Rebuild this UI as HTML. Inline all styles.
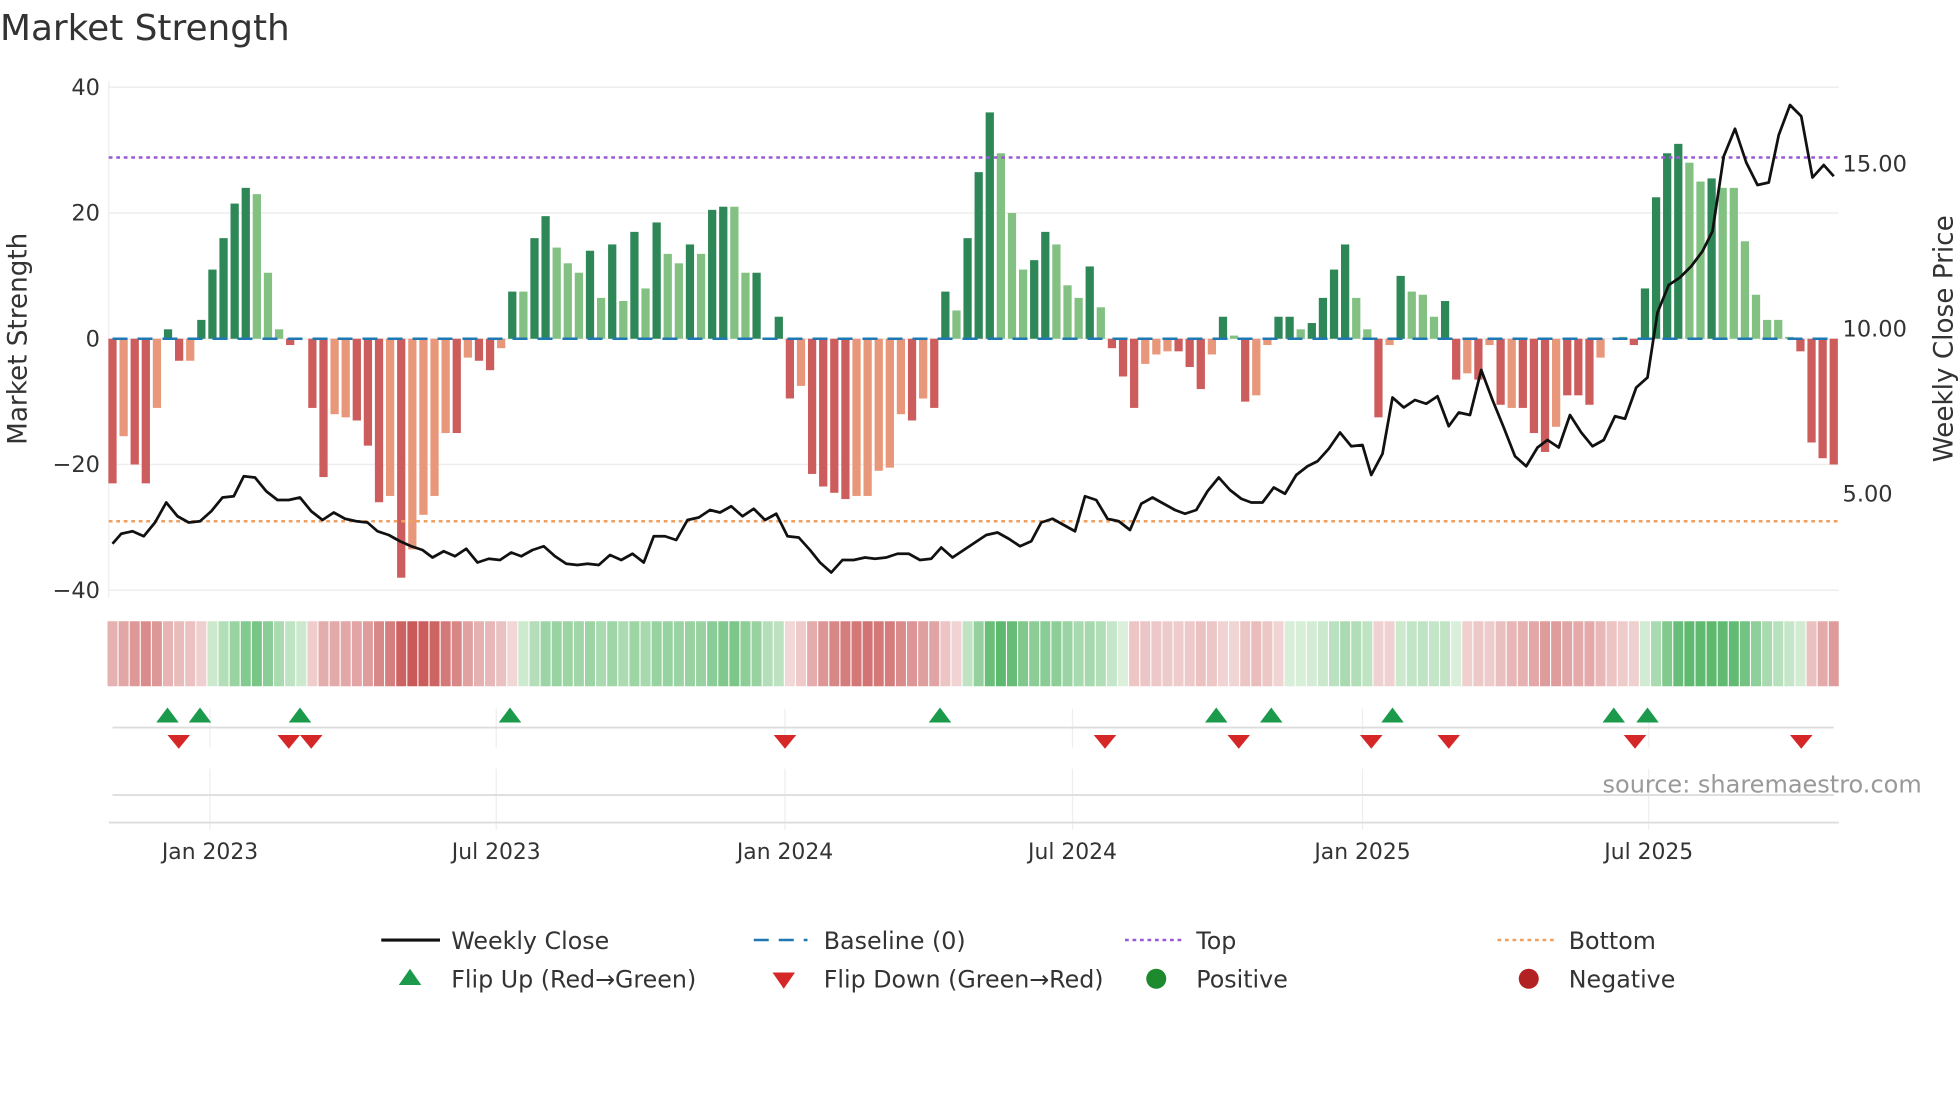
<!DOCTYPE html>
<html><head><meta charset="utf-8"><style>
html,body{margin:0;padding:0;background:#fff;width:1960px;height:1102px;overflow:hidden}
svg{display:block}
text{font-family:"DejaVu Sans","Liberation Sans",sans-serif;fill:#333}
</style></head><body>
<svg id="s" width="1960" height="1102" viewBox="0 0 1568 881.6" xmlns="http://www.w3.org/2000/svg">
<text x="0" y="32" font-size="28.7" fill="#333">Market Strength</text>
<g id="grid"></g>
<g id="bars"></g>
<g id="over"></g>
<text transform="translate(21,271) rotate(-90)" font-size="21" text-anchor="middle">Market Strength</text>
<text transform="translate(1562,271) rotate(-90)" font-size="21" text-anchor="middle">Weekly Close Price</text>
<text x="1282" y="634" font-size="19.2" fill="#999" style="fill:#999">source: sharemaestro.com</text>
<g id="legend" font-size="19">
<line x1="305" y1="752" x2="352" y2="752" stroke="#111" stroke-width="2.5"/>
<text x="361" y="759">Weekly Close</text>
<line x1="603" y1="752" x2="646" y2="752" stroke="#1f77b4" stroke-width="2" stroke-dasharray="12,8"/>
<text x="659" y="759">Baseline (0)</text>
<line x1="900" y1="752" x2="945" y2="752" stroke="#9b59d6" stroke-width="2" stroke-dasharray="3,3"/>
<text x="957" y="759">Top</text>
<line x1="1198" y1="752" x2="1243" y2="752" stroke="#f0a060" stroke-width="2" stroke-dasharray="3,3"/>
<text x="1255" y="759">Bottom</text>
<polygon points="319,788 337,788 328,775" fill="#1a9a4a"/>
<text x="361" y="790">Flip Up (Red→Green)</text>
<polygon points="618,778 636,778 627,791" fill="#d62728"/>
<text x="659" y="790">Flip Down (Green→Red)</text>
<circle cx="925" cy="783" r="8" fill="#1e8a2e"/>
<text x="957" y="790">Positive</text>
<circle cx="1223" cy="783" r="8" fill="#b22222"/>
<text x="1255" y="790">Negative</text>
</g>
</svg>
<script>
var NS="http://www.w3.org/2000/svg";
function el(p,t,a){var e=document.createElementNS(NS,t);for(var k in a)e.setAttribute(k,a[k]);p.appendChild(e);return e;}
var grid=document.getElementById('grid'),bars=document.getElementById('bars'),over=document.getElementById('over');
function Y(v){return 271-v*5.03;}
[40,20,0,-20,-40].forEach(function(v){el(grid,'line',{x1:87,x2:1471,y1:Y(v),y2:Y(v),stroke:'#eee','stroke-width':1.2});
 var t=el(grid,'text',{x:80,y:Y(v)+6,'font-size':18,'text-anchor':'end'});t.textContent=(v<0?'\u2212'+(-v):v);});
el(grid,'line',{x1:87,x2:87,y1:65,y2:478,stroke:'#eee'});
[['15.00',131],['10.00',263],['5.00',395]].forEach(function(a){var t=el(grid,'text',{x:1474,y:a[1]+6,'font-size':18});t.textContent=a[0];});
var dates=[['Jan 2023',168],['Jul 2023',397],['Jan 2024',628],['Jul 2024',858],['Jan 2025',1090],['Jul 2025',1319]];
dates.forEach(function(d){el(grid,'line',{x1:d[1],x2:d[1],y1:567,y2:598,stroke:'#eee'});el(grid,'line',{x1:d[1],x2:d[1],y1:615,y2:664,stroke:'#eee'});
 var t=el(grid,'text',{x:d[1],y:687,'font-size':17.5,'text-anchor':'middle'});t.textContent=d[0];});
el(grid,'line',{x1:90,x2:1467,y1:582,y2:582,stroke:'#ddd','stroke-width':1.5});
el(grid,'line',{x1:90,x2:1467,y1:636,y2:636,stroke:'#ddd','stroke-width':1.5});
el(grid,'line',{x1:87,x2:1471,y1:658,y2:658,stroke:'#ddd','stroke-width':1.5});
var D="R-23 r-15.5 R-20 R-23 r-11 G1.5 R-3.5 r-3.5 G3 G11 G16 G21.5 G24 g23 g10.5 g1.5 R-1 R0 R-11 R-22 r-12 r-12.5 R-13 R-17 R-26 r-25 R-38 r-33.5 r-28 r-25 r-15 R-15 r-3 R-3.5 R-5 r-1.5 G7.5 g7.5 G16 G19.5 g14.5 g12 g10.5 G14 g6.5 G15 g6 G17 g8 G18.5 g13.5 g12 G15 g13.5 G20.5 G21 g21 g10.5 G10.5 G0 G3.5 R-9.5 r-7.5 R-21.5 R-23.5 R-24.5 R-25.5 r-25 r-25 r-21 r-20.5 r-12 R-13 r-9.5 R-11 G7.5 g4.5 G16 G26.5 G36 g29.5 g20 g11 G12.5 G17 g15 g8.5 g6.5 G11.5 g5 R-1.5 R-6 R-11 r-4 r-2.5 r-2 R-2 R-4.5 R-8 r-2.5 G3.5 g0.5 R-10 r-9 r-1 G3.5 G3.5 g1.5 G2.5 G6.5 G11 G15 g6.5 g1.5 R-12.5 r-1 G10 g7.5 g7 g3.5 G6 R-6.5 r-5.5 R-6.5 r-1 R-10.5 r-11 R-11 R-15 R-18 r-14 R-9 R-9 R-10.5 r-3 G0 g0.3 R-1 G8 G22.5 G29.5 G31 g28 g25 G25.5 g24 g24 g15.5 g7 g3 g3 g0.3 R-2 R-16.5 R-19 R-20".split(' ');
var N=D.length,x0=90,x1=1467,dx=(x1-x0)/(N-1);
var col={G:'#2e8757',g:'#82c182',R:'#cd5c5c',r:'#e8977a'};
var ema=0;
for(var i=0;i<N;i++){var c=D[i][0],v=parseFloat(D[i].slice(1)),x=x0+i*dx;
 if(v!==0){var y=Math.min(Y(0),Y(v)),h=Math.abs(v)*5.03;el(bars,'rect',{x:x-3.3,y:y,width:6.6,height:h,fill:col[c]});}
 ema=ema*0.6+v*0.4;var m=Math.min(1,Math.abs(ema)/30),fill;
 if(ema>=0){var r=Math.round(220-m*150),g=Math.round(240-m*65),b=Math.round(220-m*130);fill='rgb('+r+','+g+','+b+')';}
 else{var r=Math.round(242-m*40),g=Math.round(215-m*125),b=Math.round(215-m*125);fill='rgb('+r+','+g+','+b+')';}
 el(bars,'rect',{x:x-4,y:497,width:8,height:52,fill:fill});
}
el(over,'line',{x1:90,x2:1467,y1:271,y2:271,stroke:'#1f77b4','stroke-width':2,'stroke-dasharray':'12,8'});
el(over,'line',{x1:87,x2:1471,y1:126,y2:126,stroke:'#9b59d6','stroke-width':2,'stroke-dasharray':'3,3'});
el(over,'line',{x1:87,x2:1471,y1:417,y2:417,stroke:'#f0a060','stroke-width':2,'stroke-dasharray':'3,3'});
var P="90,435 97,427 106,425 115,429 124,418 133,402 142,413 151,418 160,417 169,409 178,398 187,397 195,381 204,382 213,393 222,400 231,400 240,398 249,409 258,416 267,410 276,415 285,417 294,418 302,425 311,428 320,433 329,437 338,440 346,446 355,441 364,445 373,439 382,450 391,447 400,448 409,442 417,445 426,440 435,437 444,445 453,451 462,452 470,451 479,452 488,444 497,448 506,443 515,450 523,429 532,429 541,432 550,416 559,414 568,408 576,410 585,405 594,413 603,407 612,416 621,411 630,429 639,430 648,440 656,450 665,458 674,448 683,448 692,446 700,447 709,446 718,443 727,443 736,448 745,447 753,438 762,446 771,440 780,434 789,428 798,426 807,431 816,437 825,433 833,418 842,415 851,420 860,425 868,397 877,400 886,415 895,417 904,424 913,403 922,398 931,403 940,408 948,411 957,408 966,393 975,382 984,392 993,399 1001,402 1010,402 1019,390 1028,395 1037,380 1046,373 1054,369 1063,359 1072,346 1081,357 1090,356 1097,380 1106,363 1114,318 1123,326 1132,320 1141,323 1150,317 1159,341 1167,330 1176,332 1185,296 1194,320 1203,342 1212,365 1221,373 1230,358 1238,352 1247,358 1256,332 1265,346 1274,357 1283,352 1292,333 1300,335 1309,310 1318,302 1326,250 1335,228 1344,222 1353,213 1362,201 1370,185 1379,125 1388,103 1397,130 1406,148 1415,146 1423,108 1432,84 1441,93 1450,142 1459,132 1467,141";
el(over,'polyline',{points:P,fill:'none',stroke:'#111','stroke-width':2.2,'stroke-linejoin':'round'});
[134,160,240,408,752,973,1017,1114,1291,1318].forEach(function(x){el(over,'polygon',{points:(x-9)+',578 '+(x+9)+',578 '+x+',566',fill:'#1a9a4a'});});
[143,231,249,628,884,991,1097,1159,1308,1441].forEach(function(x){el(over,'polygon',{points:(x-9)+',588 '+(x+9)+',588 '+x+',599',fill:'#d62728'});});
</script>
</body></html>
